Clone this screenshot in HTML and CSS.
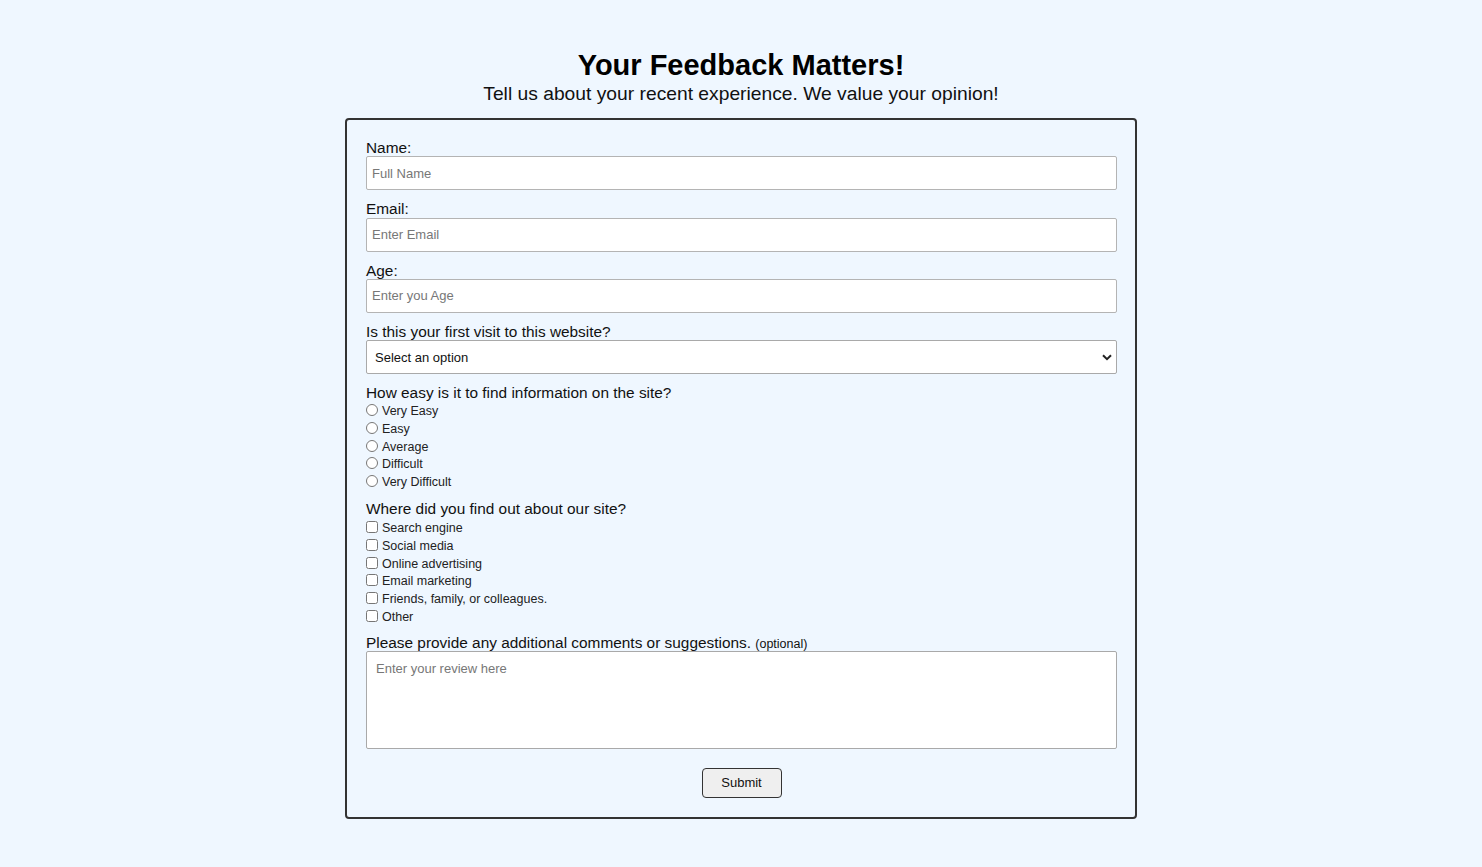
FILE: index.html
```html
<!DOCTYPE html>
<html lang="en">
<head>
<meta charset="utf-8">
<title>Feedback Form</title>
<link rel="stylesheet" href="styles.css">
</head>
<body>
<header class="intro">
  <h1 class="title">Your Feedback Matters!</h1>
  <p class="subtitle">Tell us about your recent experience. We value your opinion!</p>
</header>
<form class="card">
  <label class="field-label" for="name">Name:</label>
  <input class="text-input" id="name" type="text" placeholder="Full Name">

  <label class="field-label" for="email">Email:</label>
  <input class="text-input" id="email" type="email" placeholder="Enter Email">

  <label class="field-label" for="age">Age:</label>
  <input class="text-input" id="age" type="text" placeholder="Enter you Age">

  <label class="field-label" for="visit">Is this your first visit to this website?</label>
  <div class="select-wrap">
    <select class="select" id="visit">
      <option>Select an option</option>
      <option>Yes</option>
      <option>No</option>
    </select>
    <svg class="chev" width="10" height="7" viewBox="0 0 10 7"><path d="M1 1.2 L5 5.2 L9 1.2" fill="none" stroke="#222" stroke-width="2"/></svg>
  </div>

  <p class="group-label">How easy is it to find information on the site?</p>
  <div class="options options-radios">
    <label class="option"><input class="radio" type="radio" name="ease"> Very Easy</label>
    <label class="option"><input class="radio" type="radio" name="ease"> Easy</label>
    <label class="option"><input class="radio" type="radio" name="ease"> Average</label>
    <label class="option"><input class="radio" type="radio" name="ease"> Difficult</label>
    <label class="option"><input class="radio" type="radio" name="ease"> Very Difficult</label>
  </div>

  <p class="group-label">Where did you find out about our site?</p>
  <div class="options options-checks">
    <label class="option"><input class="check" type="checkbox"> Search engine</label>
    <label class="option"><input class="check" type="checkbox"> Social media</label>
    <label class="option"><input class="check" type="checkbox"> Online advertising</label>
    <label class="option"><input class="check" type="checkbox"> Email marketing</label>
    <label class="option"><input class="check" type="checkbox"> Friends, family, or colleagues.</label>
    <label class="option"><input class="check" type="checkbox"> Other</label>
  </div>

  <label class="group-label comments-label" for="comments">Please provide any additional comments or suggestions. <span class="optional">(optional)</span></label>
  <textarea class="textarea" id="comments" placeholder="Enter your review here"></textarea>

  <div class="actions">
    <button class="submit" type="submit">Submit</button>
  </div>
</form>
</body>
</html>
```
FILE: styles.css
```css
* { box-sizing: border-box; }

body {
  margin: 0;
  background: #eff7ff;
  font-family: "Liberation Sans", Arial, sans-serif;
  color: #111;
}

.intro {
  text-align: center;
  padding-top: 48px;
}

.title {
  margin: 0;
  font-size: 29px;
  line-height: 34px;
  font-weight: bold;
  color: #000;
}

.subtitle {
  margin: 0;
  font-size: 19.25px;
  line-height: 23px;
  color: #111;
}

.card {
  width: 792px;
  margin: 13px auto 0;
  border: 2px solid #333;
  border-radius: 4px;
  padding: 19px 18px 19px 19px;
  display: flex;
  flex-direction: column;
}

.field-label {
  display: block;
  font-size: 15.4px;
  line-height: 17.3px;
}

.text-input {
  display: block;
  width: 100%;
  height: 34px;
  margin: 0 0 10px;
  border: 1px solid #b4b4b4;
  border-radius: 2px;
  padding: 0 5px;
  font-family: "Liberation Sans", Arial, sans-serif;
  font-size: 13px;
  background: #fff;
}

.text-input::placeholder,
.textarea::placeholder {
  color: #777;
}

.select-wrap {
  position: relative;
  margin-bottom: 10px;
}

.select {
  display: block;
  width: 100%;
  height: 34px;
  border: 1px solid #a9a9a9;
  border-radius: 2px;
  padding: 0 8px;
  font-family: "Liberation Sans", Arial, sans-serif;
  font-size: 13px;
  color: #111;
  background: #fff;
  appearance: none;
  -webkit-appearance: none;
}

.chev {
  position: absolute;
  right: 5px;
  top: 14px;
  pointer-events: none;
}

.group-label {
  display: block;
  margin: 0;
  font-size: 15.4px;
  line-height: 18px;
}

.comments-label {
  line-height: 17px;
}

.options {
  display: flex;
  flex-direction: column;
}

.options-radios {
  margin-bottom: 9px;
}

.options-checks {
  padding-top: 1px;
  margin-bottom: 8px;
}

.option {
  display: flex;
  align-items: center;
  height: 17.8px;
  font-size: 12.5px;
  color: #222;
}

.radio,
.check {
  width: 12px;
  height: 12px;
  margin: 0 4px 0 0;
  flex: none;
  position: relative;
  top: -1px;
}

.optional {
  font-size: 12.5px;
  line-height: 1;
}

.textarea {
  display: block;
  width: 100%;
  height: 98px;
  border: 1px solid #a9a9a9;
  border-radius: 2px;
  padding: 9px 9px;
  font-family: "Liberation Sans", Arial, sans-serif;
  font-size: 13px;
  resize: none;
  background: #fff;
}

.actions {
  display: flex;
  justify-content: center;
  padding-top: 19px;
}

.submit {
  width: 80px;
  height: 30px;
  border: 1px solid #333;
  border-radius: 4px;
  background: #efefef;
  font-family: "Liberation Sans", Arial, sans-serif;
  font-size: 13px;
  color: #111;
}
```
